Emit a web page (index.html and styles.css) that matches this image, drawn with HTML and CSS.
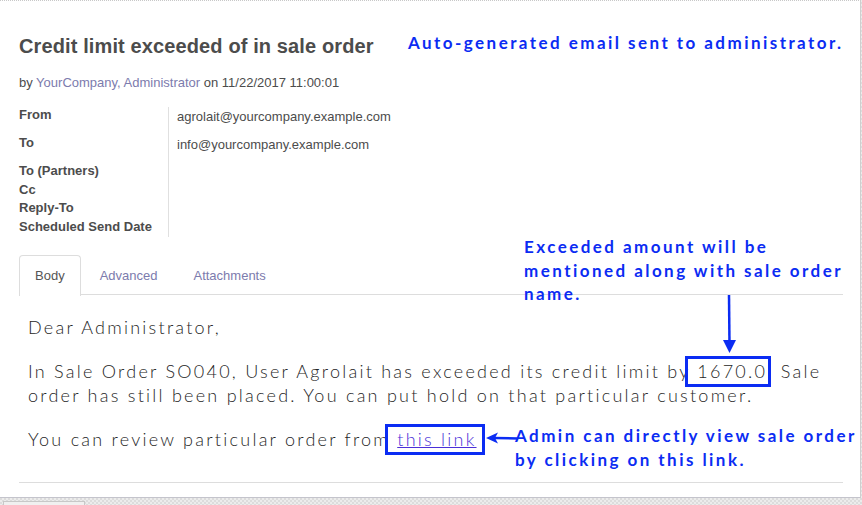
FILE: index.html
```html
<!DOCTYPE html>
<html>
<head>
<meta charset="utf-8">
<link rel="stylesheet" href="styles.css">
</head>
<body>
<div class="frame">
  <div class="sheet">
    <h1 class="title">Credit limit exceeded of in sale order</h1>
    <div class="meta">by <a class="plink">YourCompany, Administrator</a> on 11/22/2017 11:00:01</div>
    <div class="fields">
      <div class="lbl tall">From</div><div class="val tall">agrolait@yourcompany.example.com</div>
      <div class="lbl tall2">To</div><div class="val tall2">info@yourcompany.example.com</div>
      <div class="lbl">To (Partners)</div><div class="val"></div>
      <div class="lbl">Cc</div><div class="val"></div>
      <div class="lbl">Reply-To</div><div class="val"></div>
      <div class="lbl">Scheduled Send Date</div><div class="val"></div>
    </div>
    <div class="tabs">
      <div class="tab active">Body</div>
      <div class="tab">Advanced</div>
      <div class="tab">Attachments</div>
    </div>
    <div class="mail">
      <p>Dear Administrator,</p>
      <p>In Sale Order SO040, User Agrolait has exceeded its credit limit by <span class="hl amount">1670.0</span>. Sale order has still been placed. You can put hold on that particular customer.</p>
      <p>You can review particular order from <span class="hl linkbox"><a class="mlink">this link</a></span></p>
    </div>
    <div class="sep"></div>
  </div>

  <div class="note note-top">Auto-generated email sent to administrator.</div>
  <div class="note note-amount">Exceeded amount will be<br>mentioned along with sale order<br>name.</div>
  <div class="note note-link">Admin can directly view sale order<br>by clicking on this link.</div>

  <svg class="arrow arrow-down" width="16" height="62" viewBox="0 0 16 62">
    <line x1="8" y1="0" x2="8.5" y2="50" stroke="#0b2cf3" stroke-width="2.5"/>
    <polygon points="2,45 15,45 8.5,58" fill="#0b2cf3"/>
  </svg>
  <svg class="arrow arrow-left" width="32" height="14" viewBox="0 0 32 14">
    <line x1="8" y1="7" x2="32" y2="7.5" stroke="#0b2cf3" stroke-width="2.5"/>
    <polygon points="0,7 12,1.5 9,7 12,12.5" fill="#0b2cf3"/>
  </svg>
</div>
<div class="footbar"><div class="foottab"></div></div>
</body>
</html>
```

FILE: styles.css
```css
html, body {
  margin: 0;
  padding: 0;
}
body {
  width: 862px;
  height: 505px;
  overflow: hidden;
  background-color: #e6e6e6;
  background-image: repeating-conic-gradient(#dcdcdc 0 25%, #ececec 0 50%);
  background-size: 4px 4px;
  font-family: "Liberation Sans", Arial, sans-serif;
  color: #4c4c4c;
}
.frame {
  position: relative;
  width: 860px;
  height: 496px;
  background: #fff;
  border-top: 1px dotted #c8c8c8;
  border-right: 1px solid #cfcfcf;
  border-bottom: 1px solid #c4c4cc;
}
.sheet {
  padding: 0 17px 0 19px;
}
.title {
  margin: 0;
  padding-top: 31px;
  font-size: 20px;
  line-height: 28px;
  font-weight: bold;
  letter-spacing: 0.12px;
  color: #4c4c4c;
}
.meta {
  margin-top: 14px;
  font-size: 13px;
  line-height: 17px;
}
.plink {
  color: #7c7bad;
  text-decoration: none;
}
.fields {
  margin-top: 16px;
  display: grid;
  grid-template-columns: 149px 1fr;
  font-size: 13px;
}
.lbl {
  font-weight: bold;
  line-height: 18.67px;
}
.val {
  border-left: 1px solid #e0e0e0;
  padding-left: 8px;
  line-height: 18.67px;
}
.lbl.tall, .val.tall {
  line-height: 15px;
  height: 28px;
}
.lbl.tall2, .val.tall2 {
  line-height: 15px;
  height: 27px;
}
.val.tall, .val.tall2 {
  padding-top: 2px;
}
.val.tall { height: 26px; }
.val.tall2 { height: 25px; }
.tabs {
  margin-top: 18px;
  display: flex;
  gap: 2px;
  border-bottom: 1px solid #dddddd;
  height: 39px;
}
.tab {
  padding: 0 16px;
  font-size: 13px;
  line-height: 39px;
  color: #7c7bad;
  border: 1px solid transparent;
  border-bottom: none;
  border-radius: 4px 4px 0 0;
  margin-bottom: -1px;
  height: 39px;
}
.tab.active {
  color: #555555;
  border-color: #dddddd;
  background: #fff;
  padding: 0 15px;
  height: 40px;
}
.mail {
  padding: 20px 9px 0 9px;
  font-family: "Lato", "DejaVu Sans", sans-serif;
  font-weight: 300;
  font-size: 18px;
  line-height: 24px;
  letter-spacing: 2.25px;
  color: #262626;
}
.mail p {
  margin: 0 0 20px 0;
}
.hl {
  position: relative;
}
.hl::after {
  content: "";
  position: absolute;
  border: 3px solid #0b2cf3;
}
.amount::after {
  left: -12px;
  right: -4px;
  top: -4px;
  bottom: -5px;
}
.linkbox::after {
  left: -12px;
  right: -8px;
  top: -4px;
  bottom: -5px;
}
.mlink {
  color: #4a30d8;
  text-decoration: underline;
}
.sep {
  margin-top: 31px;
  border-top: 1px solid #dddddd;
}
.note {
  position: absolute;
  font-family: "Lato", "DejaVu Sans", sans-serif;
  font-weight: bold;
  font-size: 17px;
  letter-spacing: 2.45px;
  color: #0b2cf3;
  line-height: 23.5px;
  white-space: nowrap;
}
.note-top {
  left: 408px;
  top: 30px;
}
.note-amount {
  left: 524px;
  top: 234px;
}
.note-link {
  left: 515px;
  top: 423px;
}
.arrow {
  position: absolute;
}
.arrow-down {
  left: 721px;
  top: 294px;
}
.arrow-left {
  left: 486px;
  top: 430px;
}
.footbar {
  position: relative;
  height: 8px;
}
.foottab {
  position: absolute;
  left: 3px;
  top: 3px;
  width: 80px;
  height: 6px;
  background: #f0f0f0;
  border: 1px solid #c8c8c8;
}
```
